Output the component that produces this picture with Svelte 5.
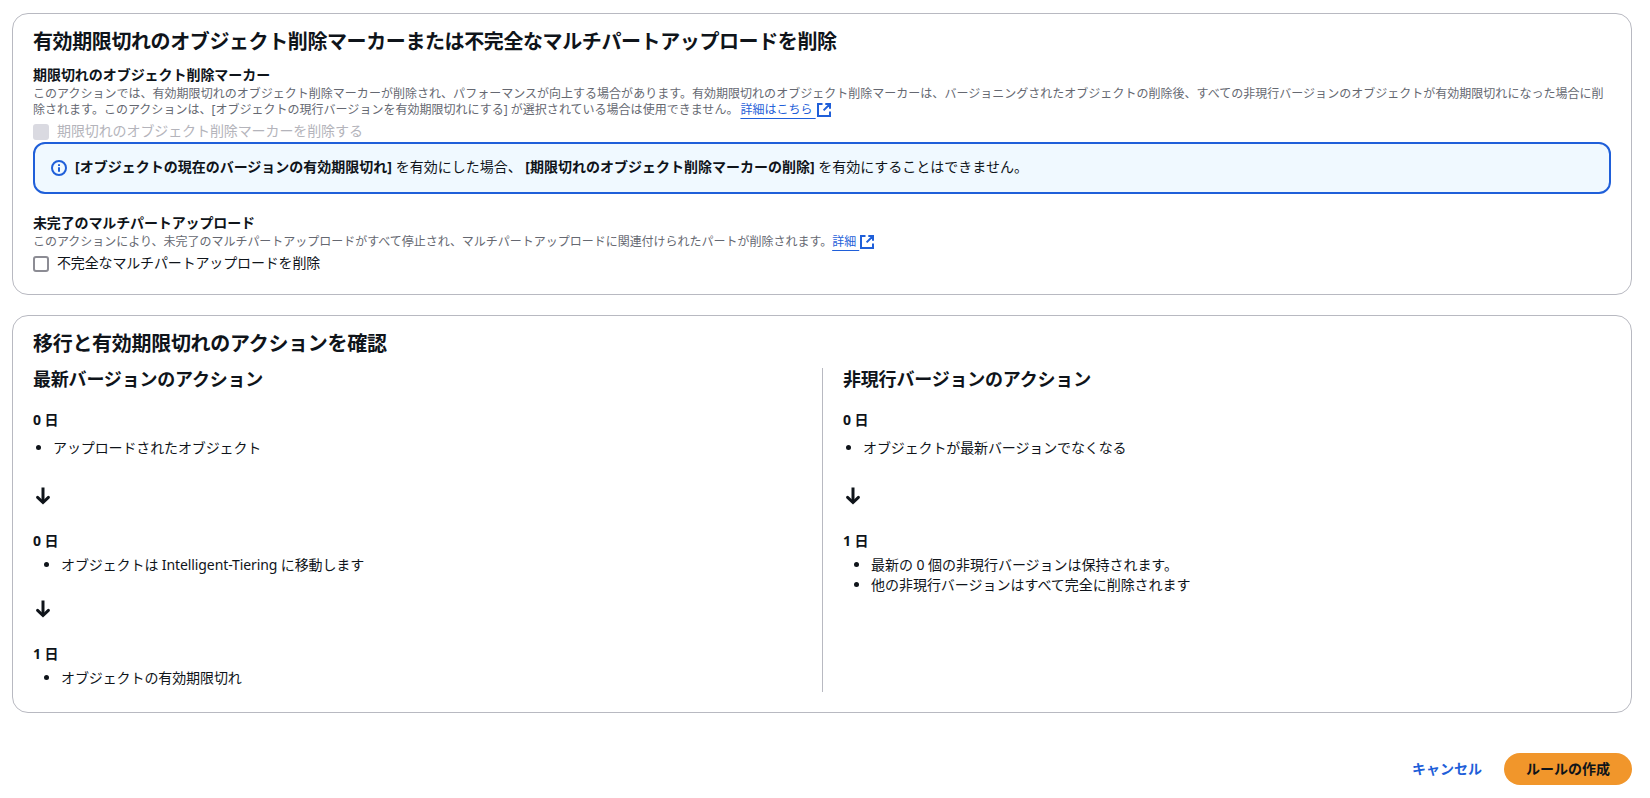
<script>
  let deleteMarkers = false;
  let deleteUploads = false;

  const currentActions = [
    { day: '0 日', items: ['アップロードされたオブジェクト'] },
    { day: '0 日', items: ['オブジェクトは Intelligent-Tiering に移動します'] },
    { day: '1 日', items: ['オブジェクトの有効期限切れ'] },
  ];

  const noncurrentActions = [
    { day: '0 日', items: ['オブジェクトが最新バージョンでなくなる'] },
    {
      day: '1 日',
      items: ['最新の 0 個の非現行バージョンは保持されます。', '他の非現行バージョンはすべて完全に削除されます'],
    },
  ];
</script>

{#snippet externalIcon()}
  <svg class="external" viewBox="0 0 16 16" aria-hidden="true">
    <path d="M6.5 2H2v12h12v-4.5M9.3 2H14v4.7M14 2L7.6 8.4" />
  </svg>
{/snippet}

{#snippet timeline(steps)}
  {#each steps as step, i}
    {#if i > 0}
      <svg class="arrow" viewBox="0 0 20 20" aria-hidden="true">
        <path d="M10 1.5v15" />
        <path d="M4.6 11.4l5.4 5.1 5.4-5.1" stroke-linecap="round" />
      </svg>
    {/if}
    <div class="step" class:first={i === 0}>
      <h4>{step.day}</h4>
      <ul>
        {#each step.items as item}
          <li>{item}</li>
        {/each}
      </ul>
    </div>
  {/each}
{/snippet}

<main lang="ja">
  <section class="card">
    <h2>有効期限切れのオブジェクト削除マーカーまたは不完全なマルチパートアップロードを削除</h2>

    <div class="field">
      <h4>期限切れのオブジェクト削除マーカー</h4>
      <p class="description markers">
        このアクションでは、有効期限切れのオブジェクト削除マーカーが削除され、パフォーマンスが向上する場合があります。有効期限切れのオブジェクト削除マーカーは、バージョニングされたオブジェクトの削除後、すべての非現行バージョンのオブジェクトが有効期限切れになった場合に削除されます。このアクションは、[オブジェクトの現行バージョンを有効期限切れにする] が選択されている場合は使用できません。<a href="#top">詳細はこちら&nbsp;</a>{@render externalIcon()}
      </p>
      <label class="disabled">
        <input type="checkbox" disabled bind:checked={deleteMarkers} />
        <span>期限切れのオブジェクト削除マーカーを削除する</span>
      </label>
    </div>

    <div class="alert">
      <svg class="info" viewBox="0 0 16 16" aria-hidden="true">
        <circle cx="8" cy="8" r="7" />
        <path d="M8 11.8V7.2M8 6V4.2" />
      </svg>
      <div class="message">
        <b>[オブジェクトの現在のバージョンの有効期限切れ]</b> を有効にした場合、 <b>[期限切れのオブジェクト削除マーカーの削除]</b> を有効にすることはできません。
      </div>
    </div>

    <div class="field uploads">
      <h4>未完了のマルチパートアップロード</h4>
      <p class="description">
        このアクションにより、未完了のマルチパートアップロードがすべて停止され、マルチパートアップロードに関連付けられたパートが削除されます。<a href="#top">詳細&nbsp;</a>{@render externalIcon()}
      </p>
      <label>
        <input type="checkbox" bind:checked={deleteUploads} />
        <span>不完全なマルチパートアップロードを削除</span>
      </label>
    </div>
  </section>

  <section class="card review">
    <h2>移行と有効期限切れのアクションを確認</h2>
    <div class="columns">
      <div class="column">
        <h3>最新バージョンのアクション</h3>
        {@render timeline(currentActions)}
      </div>
      <div class="column">
        <h3>非現行バージョンのアクション</h3>
        {@render timeline(noncurrentActions)}
      </div>
    </div>
  </section>

  <footer>
    <button class="link">キャンセル</button>
    <button class="primary">ルールの作成</button>
  </footer>
</main>

<style>
  :global(body) {
    margin: 0;
    background: #fff;
  }

  main {
    display: flex;
    flex-direction: column;
    gap: 20px;
    padding: 13px 18px 0 12px;
    font-family: 'Noto Sans', 'Noto Sans CJK JP', sans-serif;
    font-size: 14px;
    line-height: 20px;
    color: #0f141a;
  }

  h2, h3, h4, p, ul {
    margin: 0;
    padding: 0;
  }

  .card {
    box-sizing: border-box;
    border: 1px solid #b8b9c1;
    border-radius: 16px;
    padding: 16px 20px 20px;
  }

  h2 {
    font-size: 20px;
    line-height: 24px;
    letter-spacing: -0.4px;
    margin-bottom: 12px;
  }

  .review h2 {
    letter-spacing: -0.3px;
  }

  h3 {
    font-size: 18px;
    line-height: 22px;
    letter-spacing: -0.2px;
  }

  h4 {
    font-size: 14px;
    line-height: 20px;
  }

  .field h4 {
    line-height: 18px;
    padding-bottom: 2px;
    letter-spacing: -0.05px;
  }

  .field.uploads h4 {
    letter-spacing: -0.13px;
  }

  .description {
    font-size: 12px;
    line-height: 16px;
    color: #656871;
    margin-bottom: 4px;
  }

  .description.markers {
    letter-spacing: 0.017px;
  }

  .uploads .description {
    letter-spacing: -0.017px;
  }

  a {
    color: #1f5fd9;
    text-decoration: underline;
    text-decoration-thickness: 1px;
    text-underline-offset: 4px;
  }

  .markers a {
    margin-left: 2px;
  }

  .external {
    width: 16px;
    height: 16px;
    margin: -2px 0;
    vertical-align: -2px;
    fill: none;
    stroke: #1f5fd9;
    stroke-width: 2;
  }

  label {
    display: flex;
    align-items: center;
    gap: 8px;
    letter-spacing: -0.15px;
  }

  label span {
    line-height: 18px;
    padding-bottom: 2px;
  }

  label.disabled {
    color: #b4b4bb;
    letter-spacing: -0.1px;
  }

  input {
    appearance: none;
    box-sizing: border-box;
    width: 16px;
    height: 16px;
    margin: 0;
    border: 2px solid #8c8c94;
    border-radius: 3px;
    background: #fff;
  }

  input:disabled {
    border-color: #dadae1;
    background: #dadae1;
  }

  .alert {
    display: flex;
    align-items: center;
    gap: 8px;
    box-sizing: border-box;
    height: 52px;
    margin-bottom: 20px;
    padding: 0 16px;
    border: 2px solid #1f5fd9;
    border-radius: 12px;
    background: #f0f9ff;
  }

  .message {
    line-height: 18px;
    padding-bottom: 2px;
  }

  .info {
    width: 16px;
    height: 16px;
    fill: none;
    stroke: #1f5fd9;
    stroke-width: 2;
  }

  .columns {
    display: flex;
    height: 324px;
  }

  .column {
    box-sizing: border-box;
    flex: 1 1 50%;
    letter-spacing: -0.1px;
  }

  .column + .column {
    border-left: 1px solid #b8b9c1;
    padding-left: 20px;
    letter-spacing: -0.03px;
  }

  .step.first {
    margin-top: 20px;
  }

  .step ul {
    list-style: disc;
    padding: 4px 0 6px 28px;
  }

  .step.first ul {
    padding: 8px 0 10px 20px;
    letter-spacing: -0.12px;
  }

  .arrow {
    display: block;
    width: 20px;
    height: 20px;
    margin: 18px 0 25px;
    fill: none;
    stroke: #0f141a;
    stroke-width: 3;
  }

  footer {
    display: flex;
    justify-content: flex-end;
    margin-top: 20px;
  }

  button {
    height: 32px;
    border: 0;
    border-radius: 16px;
    padding: 0 22px;
    font: inherit;
    font-weight: 700;
  }

  .link {
    color: #1f5fd9;
    background: none;
  }

  .primary {
    width: 128px;
    color: #0f141a;
    background: #f1962b;
  }
</style>
